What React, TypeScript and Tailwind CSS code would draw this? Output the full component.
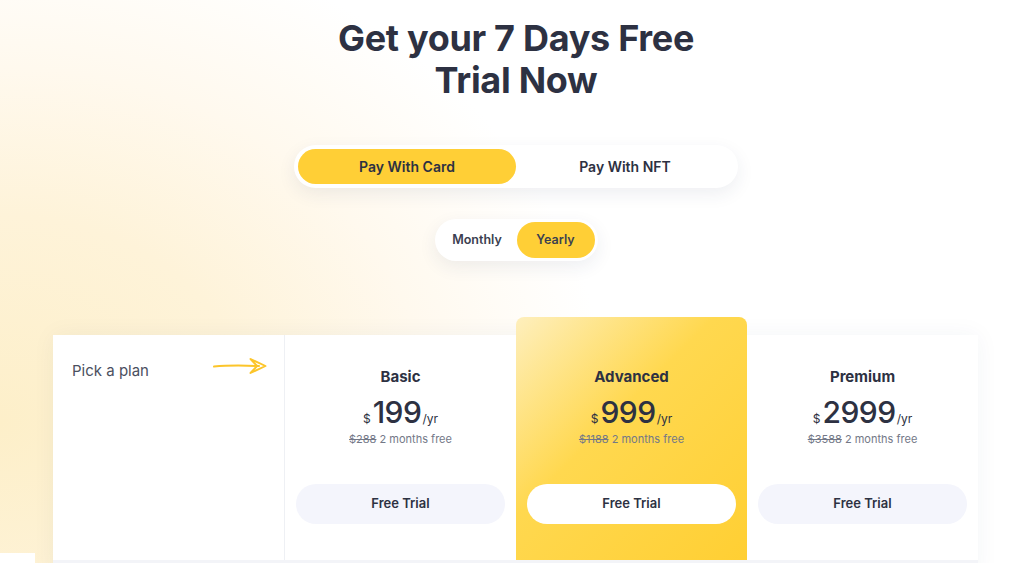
import React, { useState } from 'react';

type Plan = {
  name: string;
  price: string;
  oldPrice: string;
  featured?: boolean;
};

const plans: Plan[] = [
  { name: 'Basic', price: '199', oldPrice: '$288' },
  { name: 'Advanced', price: '999', oldPrice: '$1188', featured: true },
  { name: 'Premium', price: '2999', oldPrice: '$3588' },
];

const ArrowRight = () => (
  <svg width="54" height="18" viewBox="0 0 54 18" fill="none" className="mt-[-4px] shrink-0">
    <path d="M1 9.6 C 14 8.2, 30 8.3, 46 9" stroke="#fcc52a" strokeWidth="2" strokeLinecap="round" />
    <path
      d="M37.5 2 L52.5 9 L37.5 16 L44 9 Z"
      stroke="#fcc52a"
      strokeWidth="1.9"
      strokeLinecap="round"
      strokeLinejoin="round"
    />
  </svg>
);

const PlanColumn: React.FC<{ plan: Plan }> = ({ plan }) => (
  <div
    className={
      plan.featured
        ? 'w-[231px] h-[243px] -mt-[18px] rounded-t-lg bg-[linear-gradient(135deg,#feefbd_0%,#ffd84f_42%,#ffcf33_100%)] flex flex-col items-center pt-[50px] px-[11px]'
        : 'w-[231px] h-[225px] flex flex-col items-center pt-[32px] px-[11px]'
    }
  >
    <h3 className="text-[15px] leading-5 font-bold text-[#2d3142]">{plan.name}</h3>
    <div className="mt-[7px] flex items-baseline text-[#2d3142]">
      <span className="text-[12px] mr-[2px]">$</span>
      <span className="text-[30px] leading-9 font-medium tracking-[-0.5px]">{plan.price}</span>
      <span className="text-[12px] ml-[1px]">/yr</span>
    </div>
    <p className="mt-[1px] text-[11px] leading-4 text-[#737887]">
      <span className="line-through">{plan.oldPrice}</span> 2 months free
    </p>
    <button
      className={
        'mt-[37px] w-full h-[40px] rounded-full text-[13px] font-semibold text-[#2d3142] ' +
        (plan.featured ? 'bg-white' : 'bg-[#f4f5fc]')
      }
    >
      Free Trial
    </button>
  </div>
);

export default function App() {
  const [method, setMethod] = useState<'card' | 'nft'>('card');
  const [period, setPeriod] = useState<'monthly' | 'yearly'>('yearly');

  return (
    <div
      className="relative h-[563px] w-full overflow-hidden bg-[radial-gradient(ellipse_70%_105%_at_0%_75%,#fdefc9_0%,#fef3d9_35%,#fff9ee_60%,#ffffff_85%)] text-[#2d3142]"
      style={{ fontFamily: 'Inter, "Noto Sans", sans-serif' }}
    >
      <div className="flex flex-col items-center pl-[8px]">
        <h1 className="pt-[17px] text-center text-[36px] leading-[42px] font-bold tracking-[-0.3px] text-[#2d3142]">
          Get your 7 Days Free
          <br />
          Trial Now
        </h1>

        <div className="mt-[44px] flex w-[444px] h-[43px] p-[4px] rounded-full bg-white shadow-[0_6px_18px_rgba(40,50,90,0.08)]">
          <button
            onClick={() => setMethod('card')}
            className={
              'w-[218px] h-full rounded-full text-[14px] font-semibold text-[#2d3142] ' +
              (method === 'card' ? 'bg-[#ffcf36]' : '')
            }
          >
            Pay With Card
          </button>
          <button
            onClick={() => setMethod('nft')}
            className={
              'flex-1 h-full rounded-full text-[14px] font-semibold text-[#2d3142] ' +
              (method === 'nft' ? 'bg-[#ffcf36]' : '')
            }
          >
            Pay With NFT
          </button>
        </div>

        <div className="mt-[31px] flex w-[163px] h-[42px] p-[3px] rounded-full bg-white shadow-[0_6px_18px_rgba(40,50,90,0.08)]">
          <button
            onClick={() => setPeriod('monthly')}
            className={
              'w-[79px] h-full rounded-full text-[12.5px] font-semibold text-[#3b4050] ' +
              (period === 'monthly' ? 'bg-[#ffcf36]' : '')
            }
          >
            Monthly
          </button>
          <button
            onClick={() => setPeriod('yearly')}
            className={
              'w-[78px] h-full rounded-full text-[12.5px] font-semibold text-[#3b4050] ' +
              (period === 'yearly' ? 'bg-[#ffcf36]' : '')
            }
          >
            Yearly
          </button>
        </div>
      </div>

      <div className="ml-[53px] mt-[74px] w-[925px] bg-white shadow-[0_0_22px_rgba(40,50,90,0.05)]">
        <div className="flex items-start">
          <div className="w-[232px] h-[225px] border-r border-[#eef0f4] flex items-start justify-between pl-[19px] pr-[17px] pt-[26px]">
            <span className="text-[15px] leading-5 text-[#4b5060]">Pick a plan</span>
            <ArrowRight />
          </div>
          {plans.map((p) => (
            <PlanColumn key={p.name} plan={p} />
          ))}
        </div>
        <div className="h-[20px] bg-[#f3f4f8]" />
      </div>

      <div className="absolute left-0 bottom-0 w-[35px] h-[10px] bg-white" />
    </div>
  );
}
